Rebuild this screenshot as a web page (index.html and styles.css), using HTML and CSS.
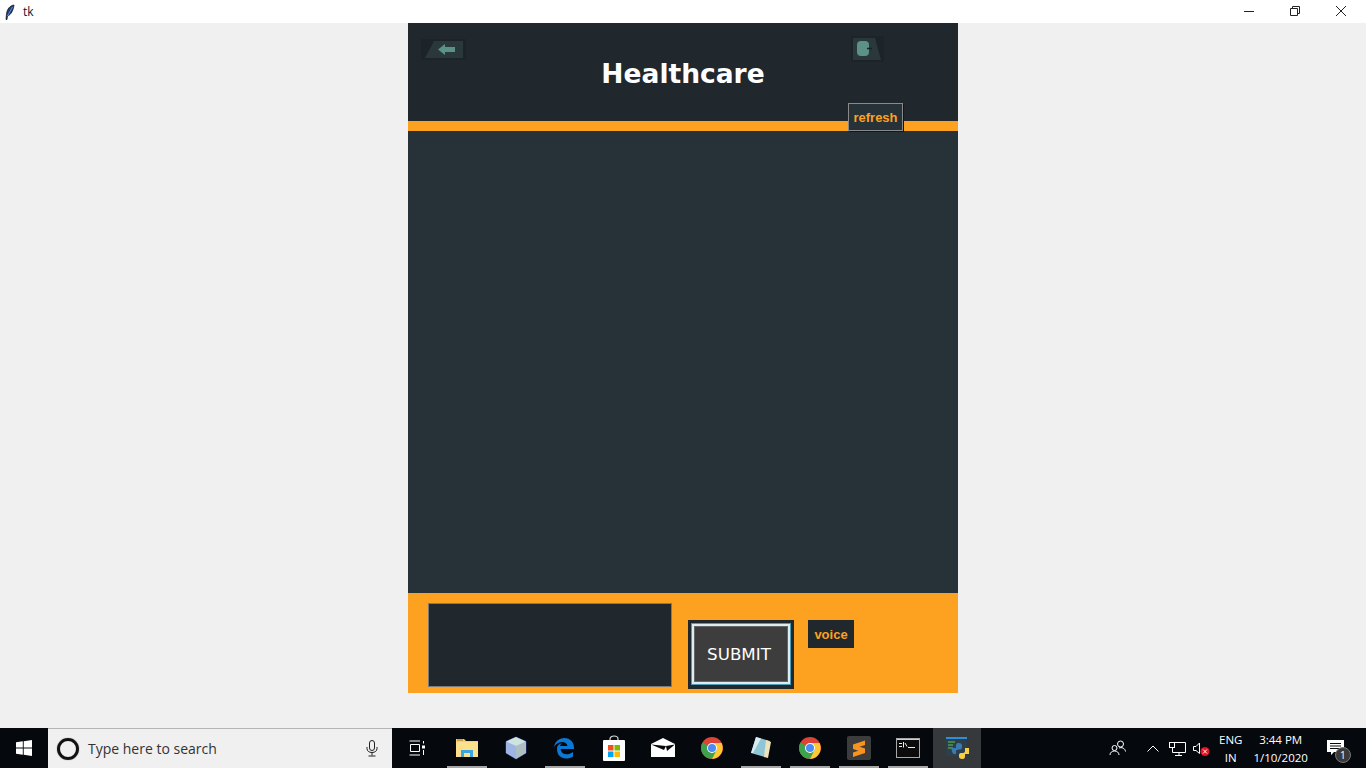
FILE: index.html
```html
<!DOCTYPE html>
<html lang="en">
<head>
  <meta charset="UTF-8" />
  <title>tk</title>
  <link rel="stylesheet" href="styles.css">
</head>
<body>
  <div class="titlebar">
    <div class="title-left">
      <svg class="feather" width="10" height="16" viewBox="0 0 10 16">
        <path d="M9 1C5 1.500 2 5 1.500 10L1 15.500L2 15.500L2.500 12C6 11 8.500 6 9 1Z" fill="#1c3d78" stroke="#0a1020" stroke-width=".7"/>
        <path d="M7.500 3L2.500 12" stroke="#8fb0e0" stroke-width=".7"/>
      </svg>
      <span class="title-text">tk</span>
    </div>
    <div class="window-btns">
      <button class="win-btn">
        <svg width="12" height="12" viewBox="0 0 12 12"><path d="M1 6.500H11" stroke="#222"/></svg>
      </button>
      <button class="win-btn">
        <svg width="12" height="12" viewBox="0 0 12 12"><path d="M1.500 3.500H8.500V10.500H1.500ZM3.500 3.500V1.500H10.500V8.500H8.500" fill="none" stroke="#222"/></svg>
      </button>
      <button class="win-btn">
        <svg width="12" height="12" viewBox="0 0 12 12"><path d="M1 1L11 11M11 1L1 11" stroke="#222"/></svg>
      </button>
    </div>
  </div>

  <div class="desktop">
    <div class="app">
      <header class="app-head">
        <div class="head-icons">
          <button class="icon-btn back-btn">
            <svg width="45" height="21" viewBox="0 0 45 21">
              <rect width="45" height="21" fill="#1c2429"/>
              <path d="M13 2H42V19H4Z" fill="#2a383c"/>
              <path d="M17 10.500L24 5V8H34V13H24V16Z" fill="#5b9186"/>
            </svg>
          </button>
          <button class="icon-btn mic-btn">
            <svg width="33" height="26" viewBox="0 0 33 26">
              <rect width="33" height="26" fill="#1c2429"/>
              <path d="M2 2H24L30 24H2Z" fill="#2a383c"/>
              <rect x="6" y="5" width="12" height="15" rx="4" fill="#5b9186"/>
              <path d="M16 12.500H21" stroke="#1a2226" stroke-width="1.500"/>
            </svg>
          </button>
        </div>
        <h1 class="app-title">Healthcare</h1>
        <button class="refresh-btn">refresh</button>
      </header>
      <div class="stripe"></div>
      <main class="chat-area"></main>
      <footer class="input-bar">
        <textarea class="msg-box"></textarea>
        <button class="submit-btn"><span class="submit-inner">SUBMIT</span></button>
        <button class="voice-btn">voice</button>
      </footer>
    </div>
  </div>

  <div class="taskbar">
    <div class="start">
      <svg width="16" height="16" viewBox="0 0 16 16"><path d="M0 2.300L6.800 1.300V7.500H0ZM7.700 1.200L16 0V7.500H7.700ZM0 8.400H6.800V14.700L0 13.700ZM7.700 8.400H16V16L7.700 14.800Z" fill="#fff"/></svg>
    </div>
    <div class="search">
      <span class="cortana"></span>
      <span class="search-text">Type here to search</span>
      <svg class="search-mic" width="12" height="17" viewBox="0 0 12 17">
        <rect x="3.500" y=".5" width="5" height="10" rx="2.500" fill="none" stroke="#222"/>
        <path d="M1 7V8.500C1 11 3 12.500 6 12.500S11 11 11 8.500V7M6 12.500V15.500M2.500 16H9.500" fill="none" stroke="#222"/>
      </svg>
    </div>
    <div class="tasks">
      <div class="task task-view">
        <svg width="18" height="16" viewBox="0 0 18 16">
          <path d="M.5 1H11M1.500 4.500H10.500V11.500H1.500ZM.5 15H11M14.500 1V3.500M14.500 10V15" fill="none" stroke="#fff"/>
          <rect x="13" y="5.500" width="3" height="3" fill="#fff"/>
        </svg>
      </div>
      <div class="task open">
        <svg width="22" height="20" viewBox="0 0 22 20">
          <path d="M0 1H8L10 3H22V19H0Z" fill="#f5cf6b"/>
          <path d="M0 4H22V19H0Z" fill="#fde08e"/>
          <path d="M5 19V12H17V19H14V15H8V19Z" fill="#3aa6de"/>
          <path d="M1 1H7V3H1Z" fill="#c9a24a"/>
        </svg>
      </div>
      <div class="task">
        <svg width="22" height="24" viewBox="0 0 22 24">
          <path d="M11 1L21 5.500V17L11 23L1 17V5.500Z" fill="#b9cfe6" stroke="#343a8c"/>
          <path d="M11 1L21 5.500L11 10L1 5.500Z" fill="#cfe3df"/>
          <path d="M1 5.500L11 10V23L1 17Z" fill="#9db4e4"/>
          <path d="M11 10L21 5.500V17L11 23Z" fill="#aebfc4"/>
        </svg>
      </div>
      <div class="task open">
        <svg width="22" height="22" viewBox="0 0 22 22">
          <path d="M3 12H20C20.500 5 16 1 10.500 1C5 1 1 4.500 0 10C2 6.500 5 5 8 5C11 5 13 6.500 13.500 9H6C6.500 7.500 7 7 8 6C4.500 7 2.800 9 3 12Z" fill="#0a78d4"/>
          <path d="M3 12C3 18 7 21.500 12 21.500C14.500 21.500 17 21 19 19.500V15C17 16.500 14.500 17.300 12.500 17.300C9.500 17.300 7 15.500 6.500 12Z" fill="#0a78d4"/>
        </svg>
      </div>
      <div class="task">
        <svg width="24" height="26" viewBox="0 0 24 26">
          <path d="M8 6V4C8 2 10 1 12 1S16 2 16 4V6" fill="none" stroke="#ddd" stroke-width="1.200"/>
          <rect x="1" y="5" width="22" height="21" rx="1" fill="#fff"/>
          <rect x="6" y="10" width="5.500" height="5.500" fill="#f25022"/>
          <rect x="12.500" y="10" width="5.500" height="5.500" fill="#7fba00"/>
          <rect x="6" y="16.500" width="5.500" height="5.500" fill="#00a4ef"/>
          <rect x="12.500" y="16.500" width="5.500" height="5.500" fill="#ffb900"/>
        </svg>
      </div>
      <div class="task">
        <svg width="24" height="20" viewBox="0 0 24 20">
          <path d="M0 6L12 0L24 6V19H0Z" fill="#fff"/>
          <path d="M0 6.500L13 12L15 8Z" fill="#05090e"/>
          <path d="M15 8L24 6.500L16 13Z" fill="#05090e"/>
        </svg>
      </div>
      <div class="task">
        <svg class="chrome" width="24" height="24" viewBox="0 0 24 24">
          <circle cx="12" cy="12" r="11" fill="#db4437"/>
          <path d="M12 12L2.500 6.500A11 11 0 0 0 12 23L17.500 13.500Z" fill="#3fa14a"/>
          <path d="M12 7H21.500A11 11 0 0 1 12 23L17 13Z" fill="#fcc934"/>
          <circle cx="12" cy="12" r="5" fill="#fff"/>
          <circle cx="12" cy="12" r="4" fill="#4a8bf5"/>
        </svg>
      </div>
      <div class="task open">
        <svg width="22" height="24" viewBox="0 0 22 24">
          <path d="M6 1L20 5L15 21L1 17Z" fill="#8fc6d6"/>
          <path d="M16 4L21 6L18 22L14 21Z" fill="#f0e2b8"/>
          <path d="M6 1L11 2.500L3 17L1 17Z" fill="#d6eef2"/>
        </svg>
      </div>
      <div class="task open">
        <svg class="chrome" width="24" height="24" viewBox="0 0 24 24">
          <circle cx="12" cy="12" r="11" fill="#db4437"/>
          <path d="M12 12L2.500 6.500A11 11 0 0 0 12 23L17.500 13.500Z" fill="#3fa14a"/>
          <path d="M12 7H21.500A11 11 0 0 1 12 23L17 13Z" fill="#fcc934"/>
          <circle cx="12" cy="12" r="5" fill="#fff"/>
          <circle cx="12" cy="12" r="4" fill="#4a8bf5"/>
        </svg>
      </div>
      <div class="task open">
        <svg width="24" height="24" viewBox="0 0 24 24">
          <rect width="24" height="24" rx="2" fill="#3c3c3c"/>
          <path d="M18 4.500V9L6 13V8.500ZM6 8.500L18 12.500V17L6 13ZM18 12.500V17L6 21V16.500Z" fill="#f7931e"/>
        </svg>
      </div>
      <div class="task open">
        <svg width="24" height="20" viewBox="0 0 24 20">
          <rect x=".5" y=".5" width="23" height="19" fill="#0c0c0c" stroke="#a8a8a8"/>
          <rect x="1" y="1" width="22" height="1" fill="#d0d0d0"/>
          <path d="M3 5.500H6M3 8.500H6M7.500 4L7.500 9.500M9 5L11 8.500M12 9.500H19" stroke="#eee"/>
        </svg>
      </div>
      <div class="task active">
        <svg width="24" height="24" viewBox="0 0 24 24">
          <rect x="1" y="1" width="21" height="19" fill="#2d3f4a"/>
          <rect x="1" y="1" width="21" height="2" fill="#2d8fd5"/>
          <path d="M3 6H10M3 9H8M3 12H8" stroke="#4f9a4f" stroke-width="1.500"/>
          <path d="M14 7C11 7 11 8.500 11 10V12H7C6 12 7 18 9 18H11V15.500C11 14 12 13.500 14 13.500C16 13.500 17 13 17 11V9.500C17 8 16 7 14 7Z" fill="#3b7ab0"/>
          <path d="M17 23C20 23 20 21.500 20 20V18H24V12H20V15C20 16.500 19 17 17 17C15 17 14 17.500 14 19V20.500C14 22 15 23 17 23Z" fill="#f7cf45"/>
        </svg>
      </div>
    </div>
    <div class="tray">
      <svg class="tray-people" width="18" height="16" viewBox="0 0 18 16">
        <circle cx="11.500" cy="4" r="3" fill="none" stroke="#fff"/>
        <circle cx="5.500" cy="8" r="2.500" fill="none" stroke="#fff"/>
        <path d="M1 15C1 12.500 3 11 5.500 11S10 12.500 10 15M10 8C12.500 7 16 8 16.500 11.500" fill="none" stroke="#fff"/>
      </svg>
      <svg class="tray-chevron" width="12" height="7" viewBox="0 0 12 7"><path d="M.5 6.500L6 1L11.500 6.500" fill="none" stroke="#fff"/></svg>
      <svg class="tray-net" width="17" height="15" viewBox="0 0 17 15">
        <path d="M3 1.500H16.500V11.500H3.500V7M10 11.500V14.500M6 14.500H13" fill="none" stroke="#fff"/>
        <rect x=".5" y="1.500" width="5" height="5" fill="#05090e" stroke="#fff"/>
      </svg>
      <svg class="tray-sound" width="17" height="14" viewBox="0 0 17 14">
        <path d="M.5 4.500H3L6.500 1V11.500L3 8.500H.5Z" fill="none" stroke="#fff"/>
        <circle cx="12" cy="9.500" r="4.500" fill="#e81123"/>
        <path d="M10 7.500L14 11.500M14 7.500L10 11.500" stroke="#fff"/>
      </svg>
      <div class="lang"><span>ENG</span><span>IN</span></div>
      <div class="clock"><span>3:44 PM</span><span>1/10/2020</span></div>
      <div class="notify">
        <svg width="18" height="16" viewBox="0 0 18 16">
          <path d="M0 0H17V12H7L4 15V12H0Z" fill="#fff"/>
          <path d="M3 3.500H14M3 6H14M3 8.500H14" stroke="#05090e"/>
        </svg>
        <span class="notify-badge">1</span>
      </div>
    </div>
  </div>
</body>
</html>
```

FILE: styles.css
```css
html, body {
  margin: 0;
  height: 768px;
  overflow: hidden;
}
body {
  background-color: #f0f0f0;
  font-family: 'Open Sans', sans-serif;
  display: flex;
  flex-direction: column;
}
button {
  font-family: inherit;
  padding: 0;
  border: none;
  cursor: pointer;
}

/* window title bar */
.titlebar {
  height: 23px;
  background: white;
  display: flex;
  justify-content: space-between;
}
.title-left {
  display: flex;
  align-items: center;
  padding-left: 5px;
}
.title-text {
  margin-left: 8px;
  font-size: 12px;
  color: #1a1030;
}
.window-btns {
  display: flex;
  padding-right: 2px;
}
.win-btn {
  width: 46px;
  height: 22px;
  background: none;
  display: flex;
  align-items: center;
  justify-content: center;
}

/* tk app */
.desktop {
  height: 705px;
  display: flex;
  justify-content: center;
}
.app {
  width: 550px;
  height: 670px;
  display: flex;
  flex-direction: column;
}
.app-head {
  position: relative;
  height: 98px;
  background: #20282e;
}
.head-icons {
  display: flex;
  justify-content: space-between;
  padding: 13px 74px 0 13px;
}
.icon-btn {
  background: none;
  display: block;
  line-height: 0;
}
.app-title {
  margin: -13px 0 0;
  text-align: center;
  color: white;
  font-family: 'DejaVu Sans', sans-serif;
  font-size: 26.5px;
  font-weight: bold;
  line-height: 50px;
}
.refresh-btn {
  position: absolute;
  left: 440px;
  top: 80px;
  width: 55px;
  height: 28px;
  background: #263238;
  border: 1px solid #8a8a8a;
  box-shadow: 1px 1px 0 #10161a;
  color: #fca120;
  font-family: 'Liberation Sans', sans-serif;
  font-size: 13px;
  font-weight: bold;
  text-align: center;
}
.stripe {
  height: 10px;
  background: #fca120;
}
.chat-area {
  height: 462px;
  background: #263238;
}
.input-bar {
  height: 100px;
  background: #fca120;
  display: flex;
  align-items: flex-start;
  padding-left: 20px;
}
.msg-box {
  width: 244px;
  height: 84px;
  margin-top: 10px;
  padding: 0;
  box-sizing: border-box;
  background: #20282e;
  border: 1px solid #7a7a7a;
  border-radius: 0;
  resize: none;
  overflow: hidden;
}
.submit-btn {
  width: 106px;
  height: 69px;
  margin: 27px 0 0 16px;
  padding: 3px 3px 4px;
  box-sizing: border-box;
  background: #20282e;
  border: none;
}
.submit-inner {
  display: flex;
  align-items: center;
  justify-content: center;
  height: 100%;
  box-sizing: border-box;
  padding-right: 4px;
  background: #3d3d3d;
  border: 1px solid #4d9ab6;
  box-shadow: inset 0 0 0 2px #dcecf0, inset 0 0 0 3px #666;
  color: white;
  font-family: 'DejaVu Sans', sans-serif;
  font-size: 16.7px;
}
.voice-btn {
  width: 46px;
  height: 28px;
  margin: 27px 0 0 14px;
  background: #20282e;
  color: #fca120;
  font-family: 'Liberation Sans', sans-serif;
  font-size: 13px;
  font-weight: bold;
}

/* windows taskbar */
.taskbar {
  height: 40px;
  background: #05090e;
  display: flex;
  color: white;
}
.start {
  width: 48px;
  display: flex;
  align-items: center;
  justify-content: center;
}
.search {
  width: 344px;
  box-sizing: border-box;
  background: #f0f0f0;
  border-top: 1px solid #b5b5b5;
  display: flex;
  align-items: center;
  padding: 0 14px 0 9px;
}
.cortana {
  width: 16px;
  height: 16px;
  border: 3px solid #111;
  border-radius: 50%;
  box-shadow: 0 0 1px #555;
}
.search-text {
  margin-left: 9px;
  flex: 1;
  font-size: 14px;
  color: #333;
}
.tasks {
  display: flex;
  padding-left: 1px;
}
.task {
  width: 49px;
  height: 40px;
  display: flex;
  align-items: center;
  justify-content: center;
}
.task.open {
  background: linear-gradient(#a6a6a6, #a6a6a6) center bottom / 40px 2px no-repeat;
}
.task.active {
  width: 48px;
  margin-left: 1px;
  background: #35393c;
}
.tray {
  flex: 1;
  display: flex;
  align-items: center;
  font-size: 11.5px;
  line-height: 18px;
}
.tray-people {
  margin-left: 128px;
}
.tray-chevron {
  margin-left: 20px;
}
.tray-net {
  margin-left: 10px;
}
.tray-sound {
  margin-left: 7px;
  margin-top: 2px;
}
.lang, .clock {
  display: flex;
  flex-direction: column;
  align-items: center;
  padding-top: 1px;
}
.lang {
  margin-left: 9px;
}
.clock {
  margin-left: 11px;
}
.notify {
  position: relative;
  margin-left: 19px;
  line-height: 0;
}
.notify-badge {
  position: absolute;
  left: 8px;
  top: 7px;
  width: 14px;
  height: 14px;
  border-radius: 50%;
  background: #3a3a3a;
  border: 1px solid #777;
  text-align: center;
  font-size: 10px;
  line-height: 14px;
}
```
